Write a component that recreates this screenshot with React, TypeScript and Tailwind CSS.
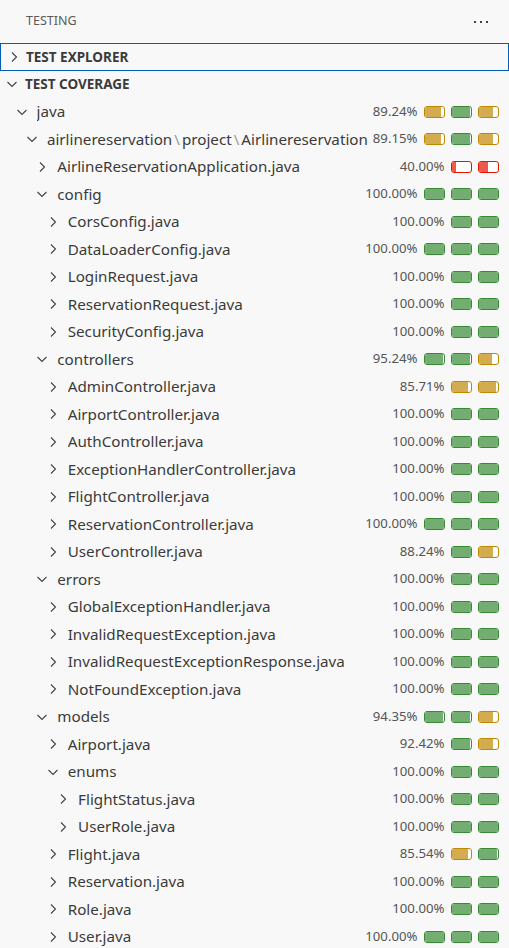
import React from "react";

type Bar = [string, number];
type Row = {
  name: React.ReactNode;
  level: number;
  open: boolean;
  pct: string;
  bars: Bar[];
};

const G = "g", Y = "y", R = "r";

const rows: Row[] = [
  { name: "java", level: 0, open: true, pct: "89.24%", bars: [[Y, 87], [G, 93], [Y, 72]] },
  {
    name: (
      <>
        airlinereservation<span className="mx-[2px] text-[#9a9a9a]">\</span>project<span className="mx-[2px] text-[#9a9a9a]">\</span>Airlinereservation
      </>
    ),
    level: 1, open: true, pct: "89.15%", bars: [[Y, 87], [G, 93], [Y, 72]],
  },
  { name: "AirlineReservationApplication.java", level: 2, open: false, pct: "40.00%", bars: [[R, 25], [R, 50]] },
  { name: "config", level: 2, open: true, pct: "100.00%", bars: [[G, 100], [G, 100], [G, 100]] },
  { name: "CorsConfig.java", level: 3, open: false, pct: "100.00%", bars: [[G, 100], [G, 100]] },
  { name: "DataLoaderConfig.java", level: 3, open: false, pct: "100.00%", bars: [[G, 100], [G, 100], [G, 100]] },
  { name: "LoginRequest.java", level: 3, open: false, pct: "100.00%", bars: [[G, 100], [G, 100]] },
  { name: "ReservationRequest.java", level: 3, open: false, pct: "100.00%", bars: [[G, 100], [G, 100]] },
  { name: "SecurityConfig.java", level: 3, open: false, pct: "100.00%", bars: [[G, 100], [G, 100]] },
  { name: "controllers", level: 2, open: true, pct: "95.24%", bars: [[G, 93], [G, 93], [Y, 70]] },
  { name: "AdminController.java", level: 3, open: false, pct: "85.71%", bars: [[Y, 85], [Y, 88]] },
  { name: "AirportController.java", level: 3, open: false, pct: "100.00%", bars: [[G, 100], [G, 100]] },
  { name: "AuthController.java", level: 3, open: false, pct: "100.00%", bars: [[G, 100], [G, 100]] },
  { name: "ExceptionHandlerController.java", level: 3, open: false, pct: "100.00%", bars: [[G, 100], [G, 100]] },
  { name: "FlightController.java", level: 3, open: false, pct: "100.00%", bars: [[G, 100], [G, 100]] },
  { name: "ReservationController.java", level: 3, open: false, pct: "100.00%", bars: [[G, 100], [G, 100], [G, 100]] },
  { name: "UserController.java", level: 3, open: false, pct: "88.24%", bars: [[G, 100], [Y, 72]] },
  { name: "errors", level: 2, open: true, pct: "100.00%", bars: [[G, 100], [G, 100]] },
  { name: "GlobalExceptionHandler.java", level: 3, open: false, pct: "100.00%", bars: [[G, 100], [G, 100]] },
  { name: "InvalidRequestException.java", level: 3, open: false, pct: "100.00%", bars: [[G, 100], [G, 100]] },
  { name: "InvalidRequestExceptionResponse.java", level: 3, open: false, pct: "100.00%", bars: [[G, 100], [G, 100]] },
  { name: "NotFoundException.java", level: 3, open: false, pct: "100.00%", bars: [[G, 100], [G, 100]] },
  { name: "models", level: 2, open: true, pct: "94.35%", bars: [[G, 93], [G, 93], [Y, 72]] },
  { name: "Airport.java", level: 3, open: false, pct: "92.42%", bars: [[G, 93], [Y, 72]] },
  { name: "enums", level: 3, open: true, pct: "100.00%", bars: [[G, 100], [G, 100]] },
  { name: "FlightStatus.java", level: 4, open: false, pct: "100.00%", bars: [[G, 100], [G, 100]] },
  { name: "UserRole.java", level: 4, open: false, pct: "100.00%", bars: [[G, 100], [G, 100]] },
  { name: "Flight.java", level: 3, open: false, pct: "85.54%", bars: [[Y, 85], [G, 94]] },
  { name: "Reservation.java", level: 3, open: false, pct: "100.00%", bars: [[G, 100], [G, 100]] },
  { name: "Role.java", level: 3, open: false, pct: "100.00%", bars: [[G, 100], [G, 100]] },
  { name: "User.java", level: 3, open: false, pct: "100.00%", bars: [[G, 100], [G, 100], [G, 100]] },
];

function ChevronRight() {
  return (
    <svg width="8" height="12" viewBox="0 0 8 12">
      <path d="M2 1.5 L6.5 6 L2 10.5" fill="none" stroke="#424242" strokeWidth="1.1" />
    </svg>
  );
}

function ChevronDown() {
  return (
    <svg width="12" height="8" viewBox="0 0 12 8">
      <path d="M1.5 2 L6 6.5 L10.5 2" fill="none" stroke="#424242" strokeWidth="1.1" />
    </svg>
  );
}

function CovBar({ color, fill }: { color: string; fill: number }) {
  const border =
    color === G ? "border-[#388a34]" : color === Y ? "border-[#bf8803]" : "border-[#e51400]";
  const bg = color === G ? "bg-[#74ad71]" : color === Y ? "bg-[#d2ac4f]" : "bg-[#ed5a4c]";
  return (
    <div className={`h-[12px] w-[21.5px] overflow-hidden rounded-[3px] border bg-white ${border}`}>
      <div className={`h-full ${bg}`} style={{ width: `${fill}%` }} />
    </div>
  );
}

export default function App() {
  return (
    <div
      className="h-[948px] w-[509px] overflow-hidden bg-[#f8f8f8] text-[#3b3b3b]"
      style={{ fontFamily: '"Noto Sans", "Open Sans", sans-serif' }}
    >
      {/* title */}
      <div className="flex h-[43px] items-center justify-between pl-[26px] pr-[21px]">
        <span className="text-[12.5px] text-[#5a5a5a]">TESTING</span>
        <div className="flex gap-[4px]">
          <div className="h-[2px] w-[2px] bg-[#424242]" />
          <div className="h-[2px] w-[2px] bg-[#424242]" />
          <div className="h-[2px] w-[2px] bg-[#424242]" />
        </div>
      </div>
      {/* test explorer header */}
      <div className="flex h-[27.5px] items-center border border-[#005fb8] pl-[9px]">
        <ChevronRight />
        <span className="ml-[8px] text-[13.5px] font-bold text-[#3b3b3b]">TEST EXPLORER</span>
      </div>
      {/* test coverage header */}
      <div className="flex h-[27.5px] items-center pl-[6px]">
        <ChevronDown />
        <span className="ml-[7px] text-[13.5px] font-bold text-[#3b3b3b]">TEST COVERAGE</span>
      </div>
      {/* tree */}
      <div className="flex flex-col">
        {rows.map((r, i) => (
          <div
            key={i}
            className="flex h-[27.5px] items-center pr-[10px]"
            style={{ paddingLeft: 11.5 + r.level * 10.4 }}
          >
            <div className="flex w-[20px] shrink-0 items-center justify-center">
              {r.open ? <ChevronDown /> : <ChevronRight />}
            </div>
            <span className="ml-[5px] min-w-0 flex-1 truncate whitespace-nowrap text-[15.2px] text-[#3b3b3b]">
              {r.name}
            </span>
            <span className="ml-1 mr-[6px] text-[13.2px] text-[#555]">{r.pct}</span>
            <div className="flex gap-[5.5px]">
              {r.bars.map((b, j) => (
                <CovBar key={j} color={b[0]} fill={b[1]} />
              ))}
            </div>
          </div>
        ))}
      </div>
    </div>
  );
}
